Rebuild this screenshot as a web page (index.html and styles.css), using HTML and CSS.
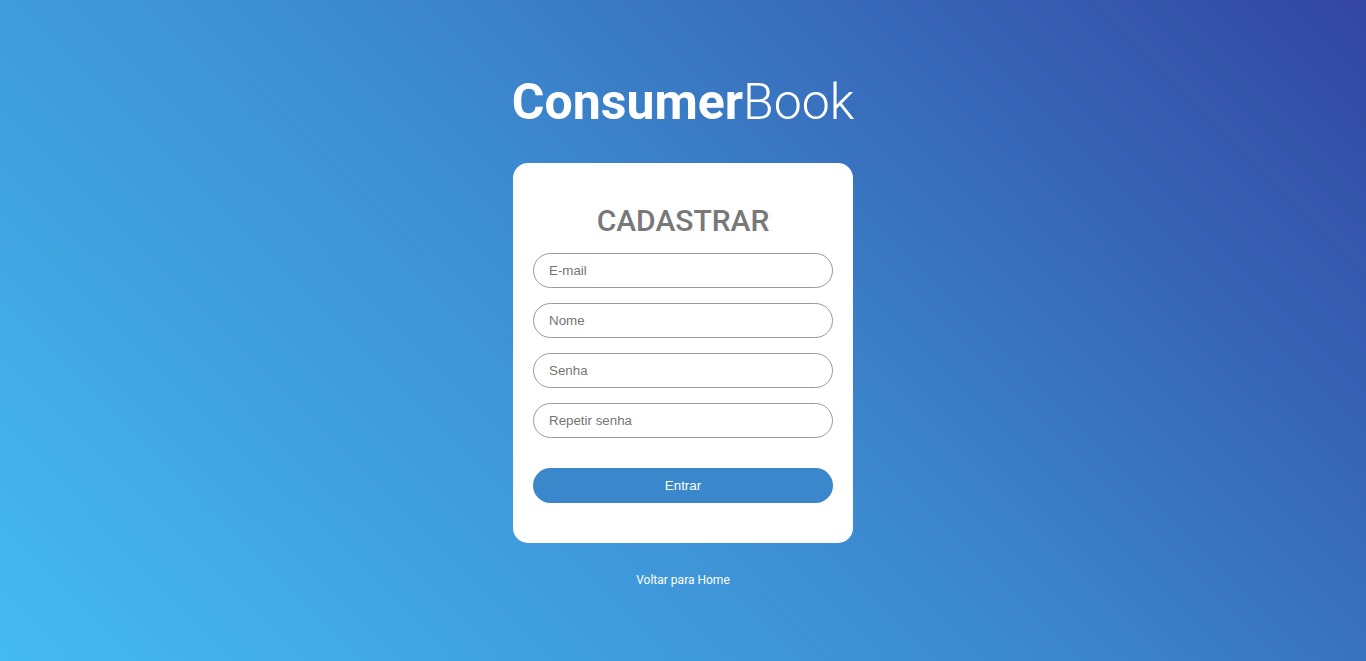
FILE: index.html
```html
<!DOCTYPE html>
<html lang="pt-BR">
<head>
<meta charset="utf-8">
<title>ConsumerBook - Cadastrar</title>
<link rel="stylesheet" href="styles.css">
</head>
<body>
<main class="page">
  <h1 class="logo"><span class="logo-bold">Consumer</span><span class="logo-light">Book</span></h1>
  <form class="card">
    <h2 class="card-title">CADASTRAR</h2>
    <input class="field" type="email" placeholder="E-mail">
    <input class="field" type="text" placeholder="Nome">
    <input class="field" type="password" placeholder="Senha">
    <input class="field" type="password" placeholder="Repetir senha">
    <button class="btn" type="button">Entrar</button>
  </form>
  <a class="back" href="#">Voltar para Home</a>
</main>
</body>
</html>
```
FILE: styles.css
```css
* { box-sizing: border-box; }
html, body { margin: 0; height: 100%; }
body {
  background: linear-gradient(45deg, #45bbf1 0%, #3c8ad0 50%, #3346a1 100%);
  font-family: Roboto, "Liberation Sans", sans-serif;
  overflow: hidden;
}
.page {
  display: flex;
  flex-direction: column;
  align-items: center;
  padding-top: 72px;
}
.logo {
  margin: 0;
  font-size: 50px;
  line-height: 61px;
  color: #fff;
  font-weight: 400;
}
.logo-bold { font-weight: 700; }
.logo-light { font-weight: 300; }
.card {
  margin-top: 30px;
  width: 340px;
  background: #fff;
  border-radius: 15px;
  padding: 40px 20px 40px;
  display: flex;
  flex-direction: column;
}
.card-title {
  margin: 0 0 15px;
  text-align: center;
  color: #787878;
  font-size: 30px;
  font-weight: 500;
  line-height: 35px;
}
.field {
  height: 35px;
  border: 1px solid #9a9a9a;
  border-radius: 18px;
  padding: 0 15px;
  font-family: "Liberation Sans", Arial, sans-serif;
  font-size: 13.33px;
  color: #333;
  margin-bottom: 15px;
  outline: none;
}
.field::placeholder { color: #757575; }
.btn {
  margin-top: 15px;
  height: 35px;
  border: none;
  border-radius: 18px;
  background: #3b87cb;
  color: #fff;
  font-family: "Liberation Sans", Arial, sans-serif;
  font-size: 13.33px;
}
.back {
  margin-top: 30px;
  color: #fff;
  font-size: 12px;
  text-decoration: none;
  line-height: 14px;
}
```
